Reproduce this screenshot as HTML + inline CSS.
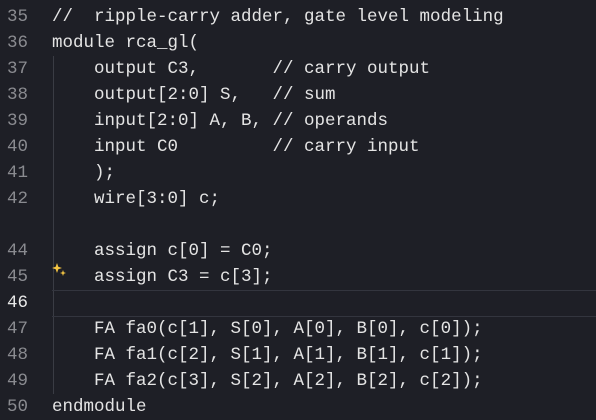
<!DOCTYPE html>
<html><head><style>
body{margin:0;width:596px;height:418px;background:#1e1f26;overflow:hidden;font-family:"Liberation Mono","DejaVu Sans Mono",monospace;font-size:17.5px;color:#e4e4e4}
.l{position:absolute;left:0;height:26px;line-height:26px;width:596px;white-space:pre}
.n{position:absolute;left:7px;color:#8a8b90}
.c{position:absolute;left:52px}
.g{position:absolute;left:53px;top:56px;width:1px;height:338px;background:#3a3c44}
.cur{position:absolute;left:52px;top:290px;width:544px;height:25px;border-top:1px solid #33353e;border-bottom:1px solid #33353e}
</style></head><body>
<div class="g"></div><div class="cur"></div>
<div class="l" style="top:4px"><span class="n">35</span><span class="c">//  ripple-carry adder, gate level modeling</span></div>
<div class="l" style="top:30px"><span class="n">36</span><span class="c">module rca_gl(</span></div>
<div class="l" style="top:56px"><span class="n">37</span><span class="c">    output C3,       // carry output</span></div>
<div class="l" style="top:82px"><span class="n">38</span><span class="c">    output[2:0] S,   // sum</span></div>
<div class="l" style="top:108px"><span class="n">39</span><span class="c">    input[2:0] A, B, // operands</span></div>
<div class="l" style="top:134px"><span class="n">40</span><span class="c">    input C0         // carry input</span></div>
<div class="l" style="top:160px"><span class="n">41</span><span class="c">    );</span></div>
<div class="l" style="top:186px"><span class="n">42</span><span class="c">    wire[3:0] c;</span></div>
<div class="l" style="top:238px"><span class="n">44</span><span class="c">    assign c[0] = C0;</span></div>
<div class="l" style="top:264px"><span class="n">45</span><span class="c">    assign C3 = c[3];</span></div>
<svg style="position:absolute;left:52px;top:263px" width="16" height="16" viewBox="0 0 16 16"><path d="M5 0 L6.3 3.7 L10 5 L6.3 6.3 L5 10 L3.7 6.3 L0 5 L3.7 3.7Z" fill="#f5c542"/><path d="M11 7 L11.8 9.2 L14 10 L11.8 10.8 L11 13 L10.2 10.8 L8 10 L10.2 9.2Z" fill="#f5c542"/></svg>
<div class="l" style="top:290px"><span class="n" style="color:#e8e8e8">46</span></div>
<div class="l" style="top:316px"><span class="n">47</span><span class="c">    FA fa0(c[1], S[0], A[0], B[0], c[0]);</span></div>
<div class="l" style="top:342px"><span class="n">48</span><span class="c">    FA fa1(c[2], S[1], A[1], B[1], c[1]);</span></div>
<div class="l" style="top:368px"><span class="n">49</span><span class="c">    FA fa2(c[3], S[2], A[2], B[2], c[2]);</span></div>
<div class="l" style="top:394px"><span class="n">50</span><span class="c">endmodule</span></div>
</body></html>
